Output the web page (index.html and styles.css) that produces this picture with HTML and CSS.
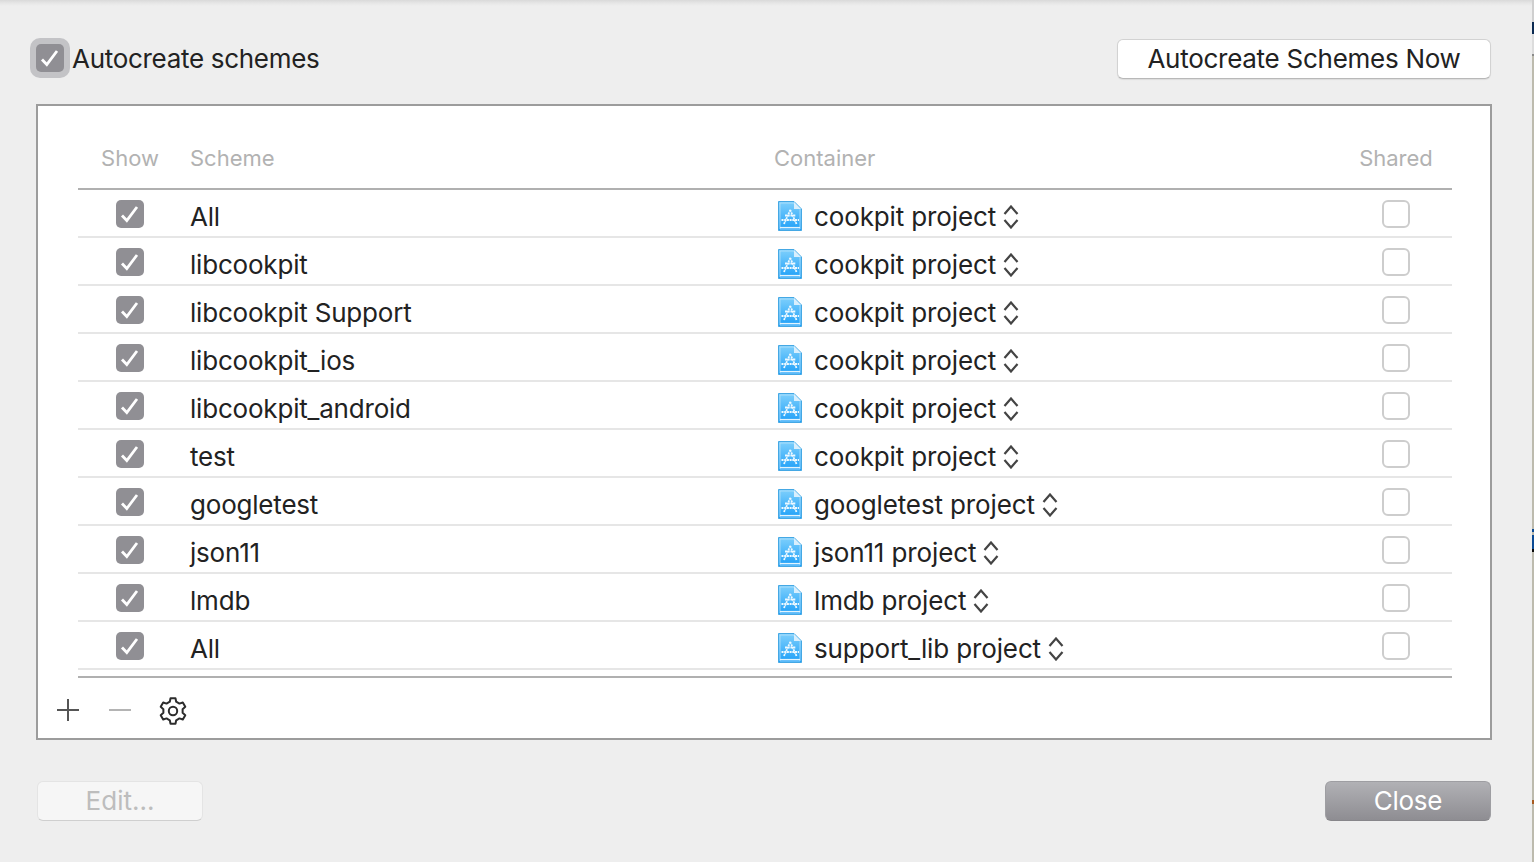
FILE: index.html
```html
<!DOCTYPE html>
<html lang="en">
<head>
<meta charset="utf-8">
<title>Manage Schemes</title>
<link rel="stylesheet" href="styles.css">
</head>
<body>
<svg class="defs" width="0" height="0" aria-hidden="true">
  <symbol id="check" viewBox="0 0 28 28">
    <path d="M6 15.500 L10.800 20.500 L21 7" fill="none" stroke="#fff" stroke-width="2.800"/>
  </symbol>
  <symbol id="doc" viewBox="0 0 24 30">
    <defs>
      <linearGradient id="docfill" x1="0" y1="0" x2="0" y2="1">
        <stop offset="0" stop-color="#7fd0fc"/>
        <stop offset="1" stop-color="#1d9ff8"/>
      </linearGradient>
    </defs>
    <path d="M.5.5 H16 L23.500 8 V29.500 H.5 Z" fill="url(#docfill)" stroke="#45a8e4"/>
    <path d="M2 2 H15.500 L22 8.500 V28 H2 Z" fill="none" stroke="#b4e1fb" stroke-width=".8"/>
    <path d="M16 1 V8 H23 Z" fill="#d9effd"/>
    <path d="M2 26.500 H22" stroke="#e2f4fe" stroke-width="1.200"/>
    <path d="M6 23 L12.500 8.500 M18.500 23 L12 8.500 M3.500 19 H21 M7 14.500 H18" stroke="#eef9ff" stroke-width="1.800" stroke-dasharray="2 .7" fill="none"/>
  </symbol>
  <symbol id="updown" viewBox="0 0 16 24">
    <path d="M1.500 9 L8 1.500 L14.500 9 M1.500 15 L8 22.500 L14.500 15" fill="none" stroke="#444" stroke-width="2.200"/>
  </symbol>
</svg>

<div class="window">
  <div class="top-row">
    <label class="auto">
      <span class="focus-ring"><span class="box on"><svg class="tick"><use href="#check"/></svg></span></span>
      <span>Autocreate schemes</span>
    </label>
    <button class="btn btn-now">Autocreate Schemes Now</button>
  </div>

  <div class="panel">
    <div class="table">
      <div class="row head">
        <div class="c-show">Show</div>
        <div>Scheme</div>
        <div class="c-container-h">Container</div>
        <div class="c-shared">Shared</div>
      </div>

      <div class="row item">
        <div class="c-show"><span class="box on"><svg class="tick"><use href="#check"/></svg></span></div>
        <div>All</div>
        <div class="c-container"><svg class="doc"><use href="#doc"/></svg><span>cookpit project</span><svg class="updown"><use href="#updown"/></svg></div>
        <div class="c-shared"><span class="box off"></span></div>
      </div>
      <div class="row item">
        <div class="c-show"><span class="box on"><svg class="tick"><use href="#check"/></svg></span></div>
        <div>libcookpit</div>
        <div class="c-container"><svg class="doc"><use href="#doc"/></svg><span>cookpit project</span><svg class="updown"><use href="#updown"/></svg></div>
        <div class="c-shared"><span class="box off"></span></div>
      </div>
      <div class="row item">
        <div class="c-show"><span class="box on"><svg class="tick"><use href="#check"/></svg></span></div>
        <div>libcookpit Support</div>
        <div class="c-container"><svg class="doc"><use href="#doc"/></svg><span>cookpit project</span><svg class="updown"><use href="#updown"/></svg></div>
        <div class="c-shared"><span class="box off"></span></div>
      </div>
      <div class="row item">
        <div class="c-show"><span class="box on"><svg class="tick"><use href="#check"/></svg></span></div>
        <div>libcookpit_ios</div>
        <div class="c-container"><svg class="doc"><use href="#doc"/></svg><span>cookpit project</span><svg class="updown"><use href="#updown"/></svg></div>
        <div class="c-shared"><span class="box off"></span></div>
      </div>
      <div class="row item">
        <div class="c-show"><span class="box on"><svg class="tick"><use href="#check"/></svg></span></div>
        <div>libcookpit_android</div>
        <div class="c-container"><svg class="doc"><use href="#doc"/></svg><span>cookpit project</span><svg class="updown"><use href="#updown"/></svg></div>
        <div class="c-shared"><span class="box off"></span></div>
      </div>
      <div class="row item">
        <div class="c-show"><span class="box on"><svg class="tick"><use href="#check"/></svg></span></div>
        <div>test</div>
        <div class="c-container"><svg class="doc"><use href="#doc"/></svg><span>cookpit project</span><svg class="updown"><use href="#updown"/></svg></div>
        <div class="c-shared"><span class="box off"></span></div>
      </div>
      <div class="row item">
        <div class="c-show"><span class="box on"><svg class="tick"><use href="#check"/></svg></span></div>
        <div>googletest</div>
        <div class="c-container"><svg class="doc"><use href="#doc"/></svg><span>googletest project</span><svg class="updown"><use href="#updown"/></svg></div>
        <div class="c-shared"><span class="box off"></span></div>
      </div>
      <div class="row item">
        <div class="c-show"><span class="box on"><svg class="tick"><use href="#check"/></svg></span></div>
        <div>json11</div>
        <div class="c-container"><svg class="doc"><use href="#doc"/></svg><span>json11 project</span><svg class="updown"><use href="#updown"/></svg></div>
        <div class="c-shared"><span class="box off"></span></div>
      </div>
      <div class="row item">
        <div class="c-show"><span class="box on"><svg class="tick"><use href="#check"/></svg></span></div>
        <div>lmdb</div>
        <div class="c-container"><svg class="doc"><use href="#doc"/></svg><span>lmdb project</span><svg class="updown"><use href="#updown"/></svg></div>
        <div class="c-shared"><span class="box off"></span></div>
      </div>
      <div class="row item">
        <div class="c-show"><span class="box on"><svg class="tick"><use href="#check"/></svg></span></div>
        <div>All</div>
        <div class="c-container"><svg class="doc"><use href="#doc"/></svg><span>support_lib project</span><svg class="updown"><use href="#updown"/></svg></div>
        <div class="c-shared"><span class="box off"></span></div>
      </div>
    </div>

    <div class="toolbar">
      <svg class="tool-plus" viewBox="0 0 24 24"><path d="M12 1 V23 M1 12 H23" stroke="#555" stroke-width="2" fill="none"/></svg>
      <svg class="tool-minus" viewBox="0 0 24 24"><path d="M1 12 H23" stroke="#b4b4b4" stroke-width="2" fill="none"/></svg>
      <svg class="tool-gear" viewBox="0 0 28 28">
        <path d="M10.810 4.730 L11.520 1.240 H16.480 L17.190 4.730 L20.430 6.600 L23.810 5.470 L26.290 9.770 L23.620 12.130 V15.870 L26.290 18.230 L23.810 22.530 L20.430 21.400 L17.190 23.270 L16.480 26.760 H11.520 L10.810 23.270 L7.570 21.400 L4.190 22.530 L1.710 18.230 L4.380 15.870 V12.130 L1.710 9.770 L4.190 5.470 L7.570 6.600 Z" fill="none" stroke="#2c2c2c" stroke-width="2" stroke-linejoin="round"/>
        <circle cx="14" cy="14" r="4.200" fill="none" stroke="#2c2c2c" stroke-width="2"/>
      </svg>
    </div>
  </div>

  <div class="bottom-row">
    <button class="btn btn-edit" disabled>Edit...</button>
    <button class="btn btn-close">Close</button>
  </div>
</div>
</body>
</html>
```

FILE: styles.css
```css
* { box-sizing: border-box; }

html, body { height: 100%; }

body {
  margin: 0;
  background: linear-gradient(
    #cfcfcf 0 22px,
    #0b2a52 22px 34px,
    #dcdcdc 34px 54px,
    #8a8a8a 54px 56px,
    #bdbbae 56px 529px,
    #0b4a94 529px 532px,
    #bdbbae 532px 535px,
    #0b4a94 535px 549px,
    #0a0a0a 549px 552px,
    #bdbbae 552px 800px,
    #a85a20 800px 804px,
    #bdbbae 804px
  );
  font-family: Inter, "Noto Sans", sans-serif;
  font-size: 26px;
  color: #222;
  overflow: hidden;
}

.defs { position: absolute; }

.window {
  width: 1532px;
  height: 862px;
  background: linear-gradient(#d9d9d9 0, #e6e6e6 3px, #eee 6px);
  padding-top: 38px;
  display: flex;
  flex-direction: column;
}

.top-row {
  display: flex;
  justify-content: space-between;
  align-items: center;
  height: 40px;
  padding: 0 41px 0 30px;
}

.auto {
  display: flex;
  align-items: center;
  gap: 2px;
  letter-spacing: -.3px;
}

.focus-ring {
  width: 40px;
  height: 40px;
  padding: 6px;
  border-radius: 10px;
  background: #c3c3c6;
}

.box {
  display: block;
  width: 28px;
  height: 28px;
  border-radius: 5px;
}

.box.on { background: #908f94; }

.box.off {
  background: #fff;
  border: 2px solid #cdcdcd;
  border-radius: 6px;
}

.tick { display: block; width: 28px; height: 28px; }

.btn {
  font: inherit;
  height: 40px;
  border-radius: 6px;
  padding: 0 0 2px;
  text-align: center;
}

.btn-now {
  width: 374px;
  margin-top: 2px;
  background: #fff;
  color: #222;
  border: 1px solid #d2d2d2;
  border-bottom-color: #b8b8b8;
  box-shadow: 0 1px 1px rgba(0, 0, 0, .08);
  letter-spacing: -.27px;
}

.panel {
  margin: 26px 40px 0 36px;
  width: 1456px;
  height: 636px;
  background: #fff;
  border: 2px solid #9c9c9c;
  padding: 0 38px 0 40px;
}

.table { border-bottom: 2px solid #b0b0b0; padding-bottom: 6px; }

.row {
  display: grid;
  grid-template-columns: 112px 584px 1fr 112px;
}

.head {
  height: 84px;
  padding-top: 39px;
  font-size: 22px;
  line-height: 26px;
  color: #b2b2b2;
  border-bottom: 2px solid #b0b0b0;
}

.item {
  height: 48px;
  align-items: center;
  border-bottom: 2px solid #e6e6e6;
  line-height: 32px;
  padding-top: 8px;
  letter-spacing: -.2px;
}

.c-show {
  display: flex;
  justify-content: center;
  padding-right: 8px;
}

.c-shared { display: flex; justify-content: center; }

.item .c-show, .item .c-shared { margin-top: -10px; padding-top: 3px; }

.c-container {
  display: flex;
  align-items: center;
  padding-left: 4px;
  letter-spacing: -.13px;
}

.doc { width: 24px; height: 30px; margin-right: 12px; margin-top: -3px; }

.updown { width: 16px; height: 24px; margin-left: 7px; }

.toolbar {
  height: 60px;
  padding-top: 4px;
  display: flex;
  align-items: center;
  margin-left: -22px;
}

.tool-plus { width: 24px; height: 24px; }
.tool-minus { width: 24px; height: 24px; margin-left: 28px; }
.tool-gear { width: 28px; height: 28px; margin-left: 27px; margin-top: 2px; }

.bottom-row {
  display: flex;
  justify-content: space-between;
  padding: 0 41px 0 37px;
  margin-top: 41px;
}

.btn-edit {
  width: 166px;
  background: #f6f6f6;
  color: #bdbdbd;
  border: 1px solid #e4e4e4;
  border-bottom-color: #cfcfcf;
}

.btn-close {
  width: 166px;
  background: linear-gradient(#b1b1b5, #8e8d92);
  color: #fff;
  border: 1px solid #9e9ea2;
  border-bottom-color: #87868a;
  letter-spacing: -.3px;
}
```
